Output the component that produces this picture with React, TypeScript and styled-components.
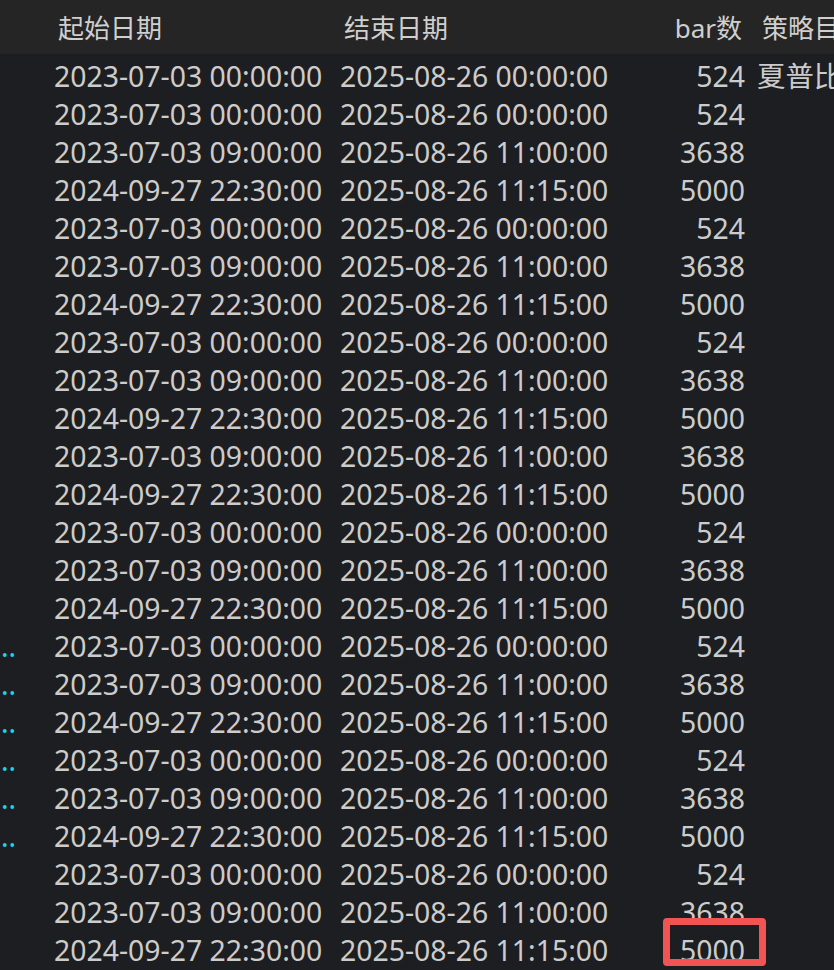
import styled, { createGlobalStyle } from "styled-components";

const Global = createGlobalStyle`
  html, body {
    margin: 0;
    padding: 0;
    background: #1d1e21;
    overflow: hidden;
  }
  body {
    font-family: "Noto Sans", "Noto Sans CJK SC", sans-serif;
    color: #cccccc;
  }
`;

const cols = "50px 286px 286px 128px 1fr";

const Table = styled.div`
  width: 1000px;
  white-space: nowrap;
`;

const Header = styled.div`
  display: grid;
  grid-template-columns: ${cols};
  height: 54px;
  align-items: center;
  background: #252526;
  font-size: 26px;
  color: #cfcfcf;
  margin-bottom: 3px;
`;

const Th = styled.div<{ $right?: boolean; $pad?: number }>`
  padding: 0 8px;
  padding-left: ${(p) => p.$pad ?? 8}px;
  text-align: ${(p) => (p.$right ? "right" : "left")};
  overflow: hidden;
`;

const Row = styled.div`
  display: grid;
  grid-template-columns: ${cols};
  height: 38px;
  line-height: 38px;
  font-size: 28.4px;
`;

const Td = styled.div<{ $right?: boolean }>`
  position: relative;
  padding: 0 5px 0 4px;
  text-align: ${(p) => (p.$right ? "right" : "left")};
  overflow: ${(p) => (p.$right ? "visible" : "hidden")};
`;

const Dots = styled.span`
  color: #1fd3e6;
  margin-left: -3px;
`;

const Note = styled.span`
  padding-left: 3px;
`;

const Highlight = styled.div`
  position: absolute;
  left: 41px;
  top: -13px;
  width: 103px;
  height: 48px;
  box-sizing: border-box;
  border: 7px solid #f25454;
  border-radius: 4px;
  pointer-events: none;
`;

type Kind = "A" | "B" | "C";

const kinds: Record<Kind, [string, string, string]> = {
  A: ["2023-07-03 00:00:00", "2025-08-26 00:00:00", "524"],
  B: ["2023-07-03 09:00:00", "2025-08-26 11:00:00", "3638"],
  C: ["2024-09-27 22:30:00", "2025-08-26 11:15:00", "5000"],
};

const seq: Kind[] = "AABCABCABCBCABCABCABCABC".split("") as Kind[];

const App = () => {
  return (
    <>
      <Global />
      <Table>
        <Header>
          <Th></Th>
          <Th>起始日期</Th>
          <Th>结束日期</Th>
          <Th $right>bar数</Th>
          <Th $pad={12}>策略目标</Th>
        </Header>
        {seq.map((k, i) => {
          const [start, end, bars] = kinds[k];
          const dotted = i >= 15 && i <= 20;
          return (
            <Row key={i}>
              <Td>{dotted && <Dots>..</Dots>}</Td>
              <Td>{start}</Td>
              <Td>{end}</Td>
              <Td $right>
                {bars}
                {i === seq.length - 1 && <Highlight />}
              </Td>
              <Td>{i === 0 && <Note>夏普比率</Note>}</Td>
            </Row>
          );
        })}
      </Table>
    </>
  );
};

export default App;
